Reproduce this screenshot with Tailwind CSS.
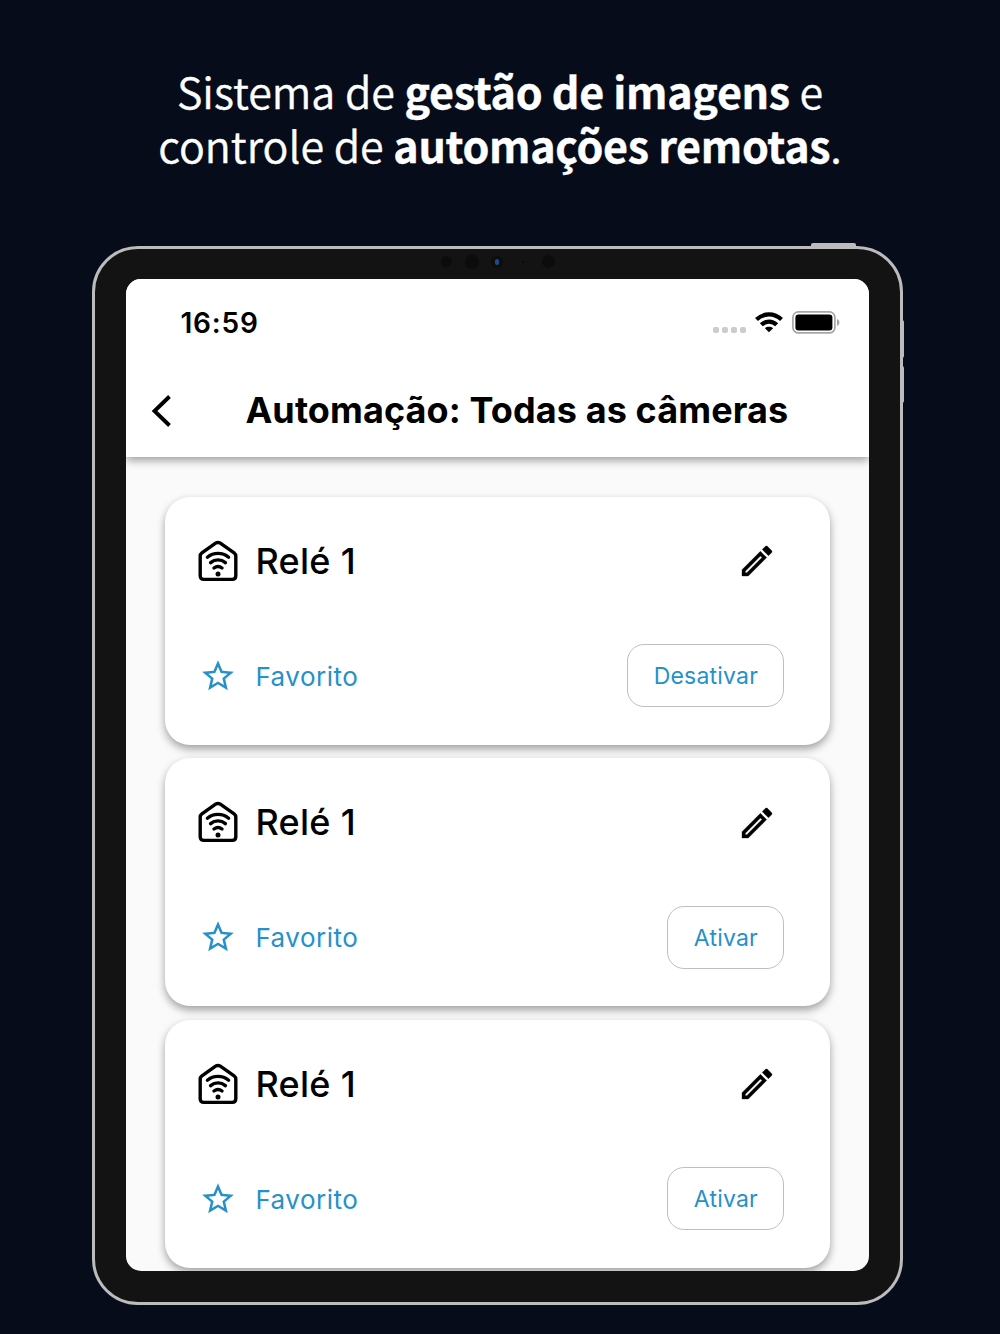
<!DOCTYPE html>
<html lang="pt-BR">
<head>
  <meta charset="UTF-8" />
  <meta name="viewport" content="width=device-width, initial-scale=1.0" />
  <title>Automação: Todas as câmeras</title>
  <script src="https://cdn.jsdelivr.net/npm/@tailwindcss/browser@4"></script>
</head>
<body class="bg-[#060c1a] h-[1334px] overflow-hidden font-['Inter',sans-serif]">
  <!-- Icons -->
  <svg class="hidden" xmlns="http://www.w3.org/2000/svg">
    <symbol id="icon-home-wifi" viewBox="0 0 40 42">
      <g fill="none" stroke="#000" stroke-width="3.4" stroke-linecap="round" stroke-linejoin="round">
        <path d="M2.2 16.2c0-1.4.6-2.5 1.7-3.3L17.6 3.2c1.5-1 3.2-1 4.7 0l13.8 9.7c1.1.8 1.7 1.9 1.7 3.3v19.6c0 2.2-1.4 3.6-3.6 3.6H5.8c-2.2 0-3.6-1.4-3.6-3.6z"/>
        <path d="M9.4 17.2c6.2-5.1 15-5.1 21.2 0"/>
        <path d="M12.6 22.6c4.4-3.7 10.4-3.7 14.8 0"/>
        <path d="M16 28c2.5-1.9 5.5-1.9 8 0"/>
      </g>
      <circle cx="20" cy="34" r="2.5"/>
    </symbol>
    <symbol id="icon-pencil" viewBox="0 0 24 24">
      <path d="M3 17.25V21h3.75L17.81 9.94l-3.75-3.75L3 17.25zM5.92 19H5v-.92l9.06-9.06.92.92L5.92 19zM20.71 5.63l-2.34-2.34c-.2-.2-.45-.29-.71-.29s-.51.1-.7.29l-1.83 1.83 3.75 3.75 1.83-1.83c.39-.39.39-1.02 0-1.41z" fill-rule="evenodd" stroke="#000" stroke-width=".2"/>
    </symbol>
    <symbol id="icon-star" viewBox="0 0 24 24">
      <path fill="currentColor" d="M22 9.24l-7.19-.62L12 2 9.19 8.63 2 9.24l5.46 4.73L5.82 21 12 17.27 18.18 21l-1.63-7.03L22 9.24zM12 15.4l-3.76 2.27 1-4.28-3.32-2.88 4.38-.38L12 6.1l1.71 4.04 4.38.38-3.32 2.88 1 4.28L12 15.4z"/>
    </symbol>
  </svg>

  <!-- Headline -->
  <h1 class="h-[246px] pt-[64px] text-center text-white text-[43px] leading-[53.5px] font-[350] [-webkit-text-stroke:0.4px_white] font-['Noto_Sans_CJK_SC',sans-serif] whitespace-nowrap">
    Sistema de <b class="font-bold tracking-[-0.3px]">gestão de imagens</b> e<br>
    controle de <b class="font-bold tracking-[-0.3px]">automações remotas</b>.
  </h1>

  <!-- Tablet -->
  <div class="relative ml-[92px] w-[811px] h-[1059px] rounded-[46px] border-[3px] border-[#bdbcbc] bg-[#131313] pt-[30px] pl-[31.4px]">
    <div class="absolute -top-[6px] left-[716px] w-[45px] h-[4px] rounded-t-xs bg-[#bdbcbc]"></div>
    <div class="absolute top-[71px] -right-[4px] w-[2px] h-[38px] rounded-r-xs bg-[#bdbcbc]"></div>
    <div class="absolute top-[117px] -right-[4px] w-[2px] h-[37px] rounded-r-xs bg-[#bdbcbc]"></div>
    <div class="absolute top-[7px] left-[346px] w-[11px] h-[11px] rounded-full bg-[#0c0c0c]"></div>
    <div class="absolute top-[6px] left-[370px] w-[14px] h-[14px] rounded-full bg-[#0c0c0c]"></div>
    <div class="absolute top-[7px] left-[396px] w-[12px] h-[12px] rounded-full bg-[#0d0d0f]"></div>
    <div class="absolute top-[10px] left-[400px] w-[4px] h-[6px] rounded-full bg-[#1b4d8c]"></div>
    <div class="absolute top-[12px] left-[427px] w-[2px] h-[2px] rounded-full bg-[#080808]"></div>
    <div class="absolute top-[6px] left-[447px] w-[13px] h-[13px] rounded-full bg-[#0c0c0c]"></div>

    <!-- Screen -->
    <div class="w-[743px] h-[991.5px] rounded-[15px] bg-[#fafafa] overflow-hidden">
      <header class="relative h-[178.4px] bg-white shadow-[0_3px_9px_rgba(0,0,0,0.4)]">
        <div class="flex items-center justify-between h-[87px] pl-[54px] pr-[29px]">
          <span class="text-[28px] font-semibold leading-none tracking-[0.8px]">16:59</span>
          <div class="flex items-center">
            <div class="flex gap-[3px] mt-[14px] mr-[9px]">
              <i class="size-[6px] rounded-[2px] bg-[#cccccc]"></i>
              <i class="size-[6px] rounded-[2px] bg-[#cccccc]"></i>
              <i class="size-[6px] rounded-[2px] bg-[#cccccc]"></i>
              <i class="size-[6px] rounded-[2px] bg-[#cccccc]"></i>
            </div>
            <svg class="w-[28px] h-[21px] mr-[9px]" viewBox="0 0 28 21">
              <g fill="none" stroke="#000" stroke-width="4.2">
                <path d="M1.5 7.6C8.7.6 19.3.6 26.5 7.6"/>
                <path d="M6.3 12.8c4.5-4.3 10.9-4.3 15.4 0"/>
              </g>
              <path d="M14 20.3l-4.1-4.1c2.4-1.9 5.8-1.9 8.2 0z"/>
            </svg>
            <svg class="w-[48px] h-[23px]" viewBox="0 0 48 23">
              <rect x=".9" y=".9" width="42" height="21" rx="5.5" fill="none" stroke="#a6a6a6" stroke-width="1.7"/>
              <rect x="3.4" y="3.4" width="37" height="16" rx="3"/>
              <path fill="#a6a6a6" d="M45 8c1.4.4 2.4 1.8 2.4 3.5S46.4 14.6 45 15z"/>
            </svg>
          </div>
        </div>
        <div class="flex items-center h-[88px]">
          <svg class="w-[22px] h-[34px] ml-[24px] mt-[2px]" viewBox="0 0 22 34" fill="none" stroke="#000" stroke-width="3.9">
            <path d="M19.5 2.5 4.5 17l15 14.5"/>
          </svg>
          <h2 class="ml-[73px] text-[36px] font-bold leading-none tracking-[0.1px] whitespace-nowrap">Automação: Todas as câmeras</h2>
        </div>
      </header>

      <main class="flex flex-col gap-[13.5px] pt-[39.5px] px-[39px]">
        <section class="h-[248px] shrink-0 rounded-[25px] bg-white shadow-[0_4px_9px_rgba(0,0,0,0.36)] pl-[33px] pr-[46px]">
          <div class="flex items-center h-[128px]">
            <svg class="w-[40px] h-[42px]"><use href="#icon-home-wifi"/></svg>
            <h3 class="ml-[17px] text-[36px] font-medium leading-none tracking-[0.3px]">Relé 1</h3>
            <svg class="ml-auto mr-[7px] mt-px size-[40px]"><use href="#icon-pencil"/></svg>
          </div>
          <div class="flex items-center h-[102px] text-[#2691c8]">
            <svg class="size-[38px] ml-px"><use href="#icon-star"/></svg>
            <span class="ml-[18px] pt-px text-[26px] tracking-[0.5px]">Favorito</span>
            <button class="ml-auto w-[157px] h-[63px] pt-px rounded-[17px] border border-[#bfbfbf] text-[23px] tracking-[0.2px]">Desativar</button>
          </div>
        </section>

        <section class="h-[248px] shrink-0 rounded-[25px] bg-white shadow-[0_4px_9px_rgba(0,0,0,0.36)] pl-[33px] pr-[46px]">
          <div class="flex items-center h-[128px]">
            <svg class="w-[40px] h-[42px]"><use href="#icon-home-wifi"/></svg>
            <h3 class="ml-[17px] text-[36px] font-medium leading-none tracking-[0.3px]">Relé 1</h3>
            <svg class="ml-auto mr-[7px] mt-px size-[40px]"><use href="#icon-pencil"/></svg>
          </div>
          <div class="flex items-center h-[102px] text-[#2691c8]">
            <svg class="size-[38px] ml-px"><use href="#icon-star"/></svg>
            <span class="ml-[18px] pt-px text-[26px] tracking-[0.5px]">Favorito</span>
            <button class="ml-auto w-[117px] h-[63px] pt-px rounded-[17px] border border-[#bfbfbf] text-[23px] tracking-[0.2px]">Ativar</button>
          </div>
        </section>

        <section class="h-[248px] shrink-0 rounded-[25px] bg-white shadow-[0_4px_9px_rgba(0,0,0,0.36)] pl-[33px] pr-[46px]">
          <div class="flex items-center h-[128px]">
            <svg class="w-[40px] h-[42px]"><use href="#icon-home-wifi"/></svg>
            <h3 class="ml-[17px] text-[36px] font-medium leading-none tracking-[0.3px]">Relé 1</h3>
            <svg class="ml-auto mr-[7px] mt-px size-[40px]"><use href="#icon-pencil"/></svg>
          </div>
          <div class="flex items-center h-[102px] text-[#2691c8]">
            <svg class="size-[38px] ml-px"><use href="#icon-star"/></svg>
            <span class="ml-[18px] pt-px text-[26px] tracking-[0.5px]">Favorito</span>
            <button class="ml-auto w-[117px] h-[63px] pt-px rounded-[17px] border border-[#bfbfbf] text-[23px] tracking-[0.2px]">Ativar</button>
          </div>
        </section>
      </main>
    </div>
  </div>
</body>
</html>
